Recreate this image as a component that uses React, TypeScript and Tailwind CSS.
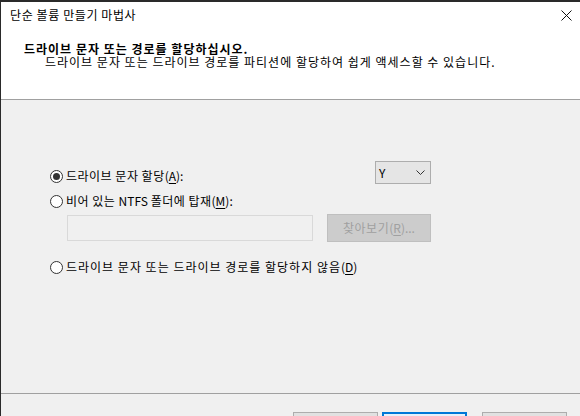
import React from "react";

const FONT = { fontFamily: '"Noto Sans CJK KR", "Noto Sans", sans-serif' };

function Radio({ checked }: { checked?: boolean }) {
  return (
    <span className="flex h-[13px] w-[13px] shrink-0 items-center justify-center rounded-full border border-[#333333] bg-white">
      {checked && <span className="h-[7px] w-[7px] rounded-full bg-[#333333]" />}
    </span>
  );
}

function Key({ children }: { children: React.ReactNode }) {
  return <span className="underline underline-offset-2">{children}</span>;
}

export default function App() {
  return (
    <div
      className="flex h-[416px] w-[580px] flex-col overflow-hidden border-l border-t-2 border-[#2a2a2a] bg-[#f0f0f0] text-[12px] text-black"
      style={FONT}
    >
      {/* title bar + wizard header */}
      <div className="h-[97px] shrink-0 bg-white">
        <div className="flex h-[26px] items-center justify-between pl-[9px] pr-[7px]">
          <span className="leading-[14px] tracking-[0.6px]">단순 볼륨 만들기 마법사</span>
          <svg width="11" height="11" viewBox="0 0 11 11" className="mr-[1px]">
            <path d="M0.5 0.5 L10.5 10.5 M10.5 0.5 L0.5 10.5" stroke="#111" strokeWidth="1" />
          </svg>
        </div>
        <div className="pt-[14px]">
          <div className="pl-[23px] font-bold leading-[13px] tracking-[1px]">드라이브 문자 또는 경로를 할당하십시오.</div>
          <div className="pl-[44px] leading-[13px] tracking-[1px]">
            드라이브 문자 또는 드라이브 경로를 파티션에 할당하여 쉽게 액세스할 수 있습니다.
          </div>
        </div>
      </div>
      <div className="h-px shrink-0 bg-[#a0a0a0]" />

      {/* options */}
      <div className="h-[293px] shrink-0 pl-[49px] pt-[61px]">
        <div className="flex h-[23px] items-start">
          <label className="mt-[8px] flex h-[14px] w-[325px] items-center gap-[3px] leading-[14px]">
            <Radio checked />
            <span>
              <span className="tracking-[0.5px]">드라이브 문자 할당</span>(<Key>A</Key>):
            </span>
          </label>
          <div className="flex h-[23px] w-[56px] items-center justify-between border border-[#adadad] bg-[#e5e5e5] pl-[3px] pr-[5px]">
            <span className="leading-[14px]">Y</span>
            <svg width="9" height="5" viewBox="0 0 9 5">
              <path d="M0.5 0.5 L4.5 4.5 L8.5 0.5" fill="none" stroke="#333" strokeWidth="1" />
            </svg>
          </div>
        </div>

        <label className="mt-[10px] flex h-[14px] items-center gap-[3px] leading-[14px]">
          <Radio />
          <span>
            <span className="tracking-[0.5px]">비어 있는 </span>NTFS <span className="tracking-[0.5px]">폴더에 탑재</span>(<Key>M</Key>):
          </span>
        </label>

        <div className="mt-[6px] flex h-[28px] items-center pl-[17px]">
          <div className="h-[26px] w-[246px] border border-[#d9d9d9] bg-[#f0f0f0]" />
          <div className="ml-[14px] flex h-[28px] w-[104px] items-center justify-center border border-[#bfbfbf] bg-[#cccccc] leading-[14px] text-[#a0a0a0]">
            <span className="tracking-[0.5px]">찾아보기</span>(<Key>R</Key>)...
          </div>
        </div>

        <label className="mt-[18px] flex h-[14px] items-center gap-[3px] leading-[14px]">
          <Radio />
          <span>
            <span className="tracking-[1px]">드라이브 문자 또는 드라이브 경로를 할당하지 않음</span>(<Key>D</Key>)
          </span>
        </label>
      </div>
      <div className="h-px shrink-0 bg-[#a0a0a0]" />

      {/* wizard buttons */}
      <div className="flex shrink-0 justify-end pr-[13px] pt-[18px]">
        <div className="flex h-[23px] w-[85px] items-center justify-center border border-[#adadad] bg-[#e1e1e1]">
          &lt; 뒤로(<Key>B</Key>)
        </div>
        <div className="ml-[4px] flex h-[23px] w-[85px] items-center justify-center border-2 border-[#0078d7] bg-[#e5f1fb]">
          다음(<Key>N</Key>) &gt;
        </div>
        <div className="ml-[15px] flex h-[23px] w-[85px] items-center justify-center border border-[#adadad] bg-[#e1e1e1]">
          취소
        </div>
      </div>
    </div>
  );
}
